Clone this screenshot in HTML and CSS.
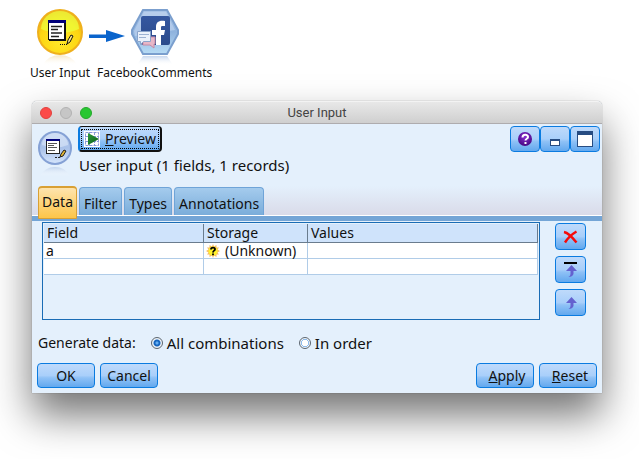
FILE: index.html
```html
<!DOCTYPE html>
<html lang="en">
<head>
<meta charset="utf-8">
<title>User Input</title>
<link rel="stylesheet" href="styles.css">
</head>
<body>
<svg class="defs" width="0" height="0" aria-hidden="true">
  <defs>
    <radialGradient id="yellow" cx="50%" cy="70%" r="65%"><stop offset="0" stop-color="#ffe92a"/><stop offset=".7" stop-color="#fdd512"/><stop offset="1" stop-color="#eda716"/></radialGradient>
    <linearGradient id="blueball" x1="0" y1="0" x2="0" y2="1"><stop offset="0" stop-color="#bccfef"/><stop offset=".5" stop-color="#a9c1e9"/><stop offset="1" stop-color="#d6e6fc"/></linearGradient>
    <linearGradient id="hex" x1="0" y1="0" x2="0" y2="1"><stop offset="0" stop-color="#a9c4e8"/><stop offset=".5" stop-color="#8fb3de"/><stop offset="1" stop-color="#b7dcf5"/></linearGradient>
    <linearGradient id="fb" x1="0" y1="0" x2="0" y2="1"><stop offset="0" stop-color="#3558a0"/><stop offset="1" stop-color="#2b4a8b"/></linearGradient>
    <linearGradient id="fadeYellow" x1="0" y1="0" x2="0" y2="1"><stop offset="0" stop-color="#f3dfb0" stop-opacity=".8"/><stop offset="1" stop-color="#fff" stop-opacity="0"/></linearGradient>
    <linearGradient id="fadeBlue" x1="0" y1="0" x2="0" y2="1"><stop offset="0" stop-color="#b9cdea" stop-opacity=".8"/><stop offset="1" stop-color="#fff" stop-opacity="0"/></linearGradient>
    <radialGradient id="purple" cx="50%" cy="35%" r="60%"><stop offset="0" stop-color="#8a2fd0"/><stop offset="1" stop-color="#4b0a87"/></radialGradient>
    <linearGradient id="play" x1="0" y1="0" x2="1" y2="1"><stop offset="0" stop-color="#2f9a3c"/><stop offset="1" stop-color="#075c14"/></linearGradient>
  </defs>
</svg>

<main class="canvas">
  <div class="node">
    <svg width="48" height="56" viewBox="0 0 48 56" aria-hidden="true">
      <path d="M7 56Q12 46 24 46T41 56Z" fill="url(#fadeYellow)"/>
      <circle cx="24" cy="23" r="22" fill="url(#yellow)" stroke="#efb01d" stroke-width="2"/>
      <path d="M5 20a19 18 0 0 1 38 0q-19 8-38 0z" fill="#ecff3c" opacity=".75"/>
      <rect x="12.500" y="12.500" width="16" height="18" fill="#fff" stroke="#111"/>
      <path d="M13 31.500h17M29.500 14v17" stroke="#111" fill="none"/>
      <rect x="12" y="11" width="18" height="3" fill="#00007a"/>
      <path d="M15 17.500h11M15 20.500h7M15 24h11M15 27.500h8" stroke="#222" stroke-width="1.500"/>
      <path d="M24 35.500h7" stroke="#111" stroke-dasharray="1 1"/>
      <path d="M31 35l1-4 3-5 2 1-3 6z" fill="#ffe98a" stroke="#111"/>
    </svg>
    <span>User Input</span>
    <svg class="link" width="36" height="12" viewBox="0 0 36 12" aria-hidden="true"><path d="M0 4.500h17V0L36 6 17 12V8H0z" fill="#0a64cc"/></svg>
  </div>
  <div class="node">
    <svg width="48" height="56" viewBox="0 0 48 56" aria-hidden="true">
      <path d="M6 56l6-9h24l6 9z" fill="url(#fadeBlue)"/>
      <path d="M12 1h24l11 20v4L36 45H12L1 25v-4z" fill="url(#hex)" stroke="#7b9fce" stroke-width="2"/>
      <path d="M13 3h22l9 18-40 6-1-5z" fill="#c0d4f0" opacity=".65"/>
      <rect x="10" y="7" width="29" height="29" rx="2" fill="url(#fb)"/>
      <path d="M25 36V26h-4v-5h4v-3c0-5 3-7 9-6v5c-4 0-4 0-4 2v2h4l-1 5h-3v10z" fill="#fff"/>
      <path d="M12 28h12v7h-1v4l-4-3h-7z" fill="#e8b7c7" stroke="#c58ba6"/>
      <path d="M6.500 22.500h13v10h-7l-3 3v-3h-3z" fill="#eaf1fb" stroke="#8aa4cb"/>
      <path d="M8 25.500h10M8 28.500h7" stroke="#9cb2d3"/>
    </svg>
    <span>FacebookComments</span>
  </div>
</main>

<section class="window" aria-label="User Input">
  <header class="titlebar">
    <div class="lights"><i class="red"></i><i class="grey"></i><i class="green"></i></div>
    <h1>User Input</h1>
  </header>
  <form class="dialog">
    <div class="head">
      <svg class="badge" width="36" height="46" viewBox="0 0 36 46" aria-hidden="true">
        <path d="M3 46Q8 37 18 37T33 46Z" fill="url(#fadeBlue)"/>
        <circle cx="18" cy="18" r="16" fill="url(#blueball)" stroke="#85a1d5" stroke-width="2"/>
        <path d="M5 15a13 12 0 0 1 26 0q-13 5-26 0z" fill="#dce7f9" opacity=".6"/>
        <rect x="9.500" y="9.500" width="13" height="14" fill="#fff" stroke="#222"/>
        <rect x="9" y="9" width="14" height="2" fill="#00007a"/>
        <path d="M11 13.500h9M11 15.500h6M11 17.500h9M11 20.500h7" stroke="#555"/>
        <path d="M18 27.500h6" stroke="#222" stroke-dasharray="2 1"/>
        <path d="M23 27l1-3 3-4 2 1-3 5z" fill="#e4b630" stroke="#222"/>
      </svg>
      <div class="intro">
        <button type="button" class="btn preview">
          <svg width="16" height="16" viewBox="0 0 16 16" aria-hidden="true"><path d="M0 0h16v16H0z" fill="#fff"/><path d="M1.500 1.500h13v13h-13zM5.500 1v14M10.500 1v14M1 5.500h14M1 10.500h14" fill="none" stroke="#8a9bd8" stroke-dasharray="3 1"/><path d="M4 2l11 6-11 6z" fill="url(#play)"/></svg>
          <span><u>P</u>review</span>
        </button>
        <p>User input (1 fields, 1 records)</p>
      </div>
      <div class="tools">
        <button type="button" class="btn" aria-label="Help"><svg width="16" height="16" viewBox="0 0 16 16"><circle cx="8" cy="8" r="7" fill="url(#purple)"/><path d="M5.500 6.500c0-3.500 5.500-3.500 5.500-.5 0 2-2.500 1.500-2.500 3.500M8.500 11v2" fill="none" stroke="#fff" stroke-width="2"/></svg></button>
        <button type="button" class="btn" aria-label="Minimize"><svg width="16" height="16" viewBox="0 0 16 16"><path d="M3 8h10v7H3z" fill="#274c82"/><path d="M4 10h8v4H4z" fill="#fff"/></svg></button>
        <button type="button" class="btn" aria-label="Maximize"><svg width="16" height="16" viewBox="0 0 16 16"><path d="M0 0h16v16H0z" fill="#274c82"/><path d="M1 4h14v11H1z" fill="#fff"/></svg></button>
      </div>
    </div>
    <nav class="tabs">
      <button type="button" class="tab active">Data</button>
      <button type="button" class="tab">Filter</button>
      <button type="button" class="tab">Types</button>
      <button type="button" class="tab">Annotations</button>
    </nav>
    <div class="panel">
      <div class="frame">
        <table>
          <colgroup><col class="c1"><col class="c2"><col></colgroup>
          <thead><tr><th>Field</th><th>Storage</th><th>Values</th></tr></thead>
          <tbody>
            <tr><td>a</td><td><div class="kind"><svg width="14" height="14" viewBox="0 0 14 14" aria-hidden="true"><path d="M7 0l1 2.500L10.500 1l0 2.500 2.500 0-1.500 2L14 7l-2.500 1.500 1.500 2-2.500 0 0 2.500L8 11.500 7 14 6 11.500 3.500 13l0-2.500-2.500 0 1.500-2L0 7l2.500-1.500L1 3.500l2.500 0L3.500 1 6 2.500z" fill="#f9bd62"/><circle cx="7" cy="7" r="4.500" fill="#fff32b"/><path d="M5 5.500c0-2.500 4-2.500 4-.3C9 6.800 7 6.500 7 8.500M7 9.500v1.800" fill="none" stroke="#000" stroke-width="1.800"/></svg>(Unknown)</div></td><td></td></tr>
            <tr><td></td><td></td><td></td></tr>
          </tbody>
        </table>
      </div>
      <div class="side">
        <button type="button" class="btn" aria-label="Delete"><svg width="16" height="14" viewBox="0 0 16 14"><path d="M1 2Q6 3 13.500 12.500M13.500 1.500Q6 6 2 12.500" fill="none" stroke="#f50a0a" stroke-width="2.400"/></svg></button>
        <button type="button" class="btn" aria-label="Move to top"><svg width="14" height="16" viewBox="0 0 14 16"><path d="M0 0h13v2H0z"/><path d="M7.500 3L13 9H9.500v3q-1 3-5 3 2-1 2-3V9H2z" fill="#6461cf"/></svg></button>
        <button type="button" class="btn" aria-label="Move up"><svg width="14" height="16" viewBox="0 0 14 16"><path d="M7.500 2L13 8H9.500v3q-1 3-5 3 2-1 2-3V8H2z" fill="#6461cf"/></svg></button>
      </div>
    </div>
    <div class="options" role="radiogroup" aria-labelledby="gen">
      <span id="gen">Generate data:</span>
      <label><input type="radio" name="mode" checked>All combinations</label>
      <label><input type="radio" name="mode">In order</label>
    </div>
    <footer class="actions">
      <button type="button" class="btn">OK</button>
      <button type="button" class="btn">Cancel</button>
      <button type="button" class="btn key push"><span><u>A</u>pply</span></button>
      <button type="button" class="btn key"><span><u>R</u>eset</span></button>
    </footer>
  </form>
</section>
</body>
</html>
```
FILE: styles.css
```css
* { box-sizing: border-box; }
body {
  margin: 0;
  min-height: 100vh;
  background: #fff;
  color: #111;
  font: 14px/18px "Noto Sans", "Open Sans", sans-serif;
}
button, input { font: inherit; color: inherit; margin: 0; }
svg { display: block; flex: none; }
.defs { position: absolute; }

.canvas {
  display: flex;
  gap: 7px;
  padding: 9px 0 0 30px;
  height: 101px;
}
.node {
  position: relative;
  display: flex;
  flex-direction: column;
  align-items: center;
  font-size: 12px;
  line-height: 16px;
}
.link { position: absolute; left: 59px; top: 21px; }

.window {
  margin: 0 37px 0 32px;
  border-radius: 5px 5px 0 0;
  background: #e4f0fc;
  box-shadow: 0 0 1px rgba(0, 0, 0, .6), 0 22px 40px rgba(0, 0, 0, .55);
}
.titlebar {
  display: grid;
  grid-template-columns: 1fr auto 1fr;
  align-items: center;
  height: 23px;
  padding: 0 8px;
  border-radius: 5px 5px 0 0;
  border-bottom: 1px solid #aeacae;
  border-top: 1px solid #f3f3f3;
  background: linear-gradient(#e8e8e8, #cfcfcf);
}
.titlebar h1 { margin: 0; font: 400 13px/18px Roboto, "Noto Sans", sans-serif; color: #444; }
.lights { display: flex; gap: 8px; }
.lights i { width: 12px; height: 12px; border-radius: 50%; border: 1px solid; }
.lights .red { background: #fc4a48; border-color: #e2403d; }
.lights .grey { background: #c6c6c6; border-color: #b2b2b2; }
.lights .green { background: #28c732; border-color: #24a82b; }

.btn {
  display: flex;
  align-items: center;
  justify-content: center;
  padding: 0;
  border: 1px solid #0a7be0;
  border-radius: 4px;
  background: linear-gradient(#bfdafb, #a9cffa 50%, #8fc1f6 60%, #62a8ee);
}
.head {
  display: flex;
  padding: 2px 2px 0 5px;
  height: 62px;
  background: #e4f0fc;
}
.badge { margin-top: 4px; }
.intro { flex: 1; margin-left: 5px; }
.intro p { margin: 4px 0 0 1px; font-size: 15px; }
.preview {
  height: 26px;
  width: 84px;
  gap: 5px;
  border: 2px solid #111;
  border-top-width: 1px;
  border-left-color: #0a7be0;
  outline: 1px dotted #000;
  outline-offset: -4px;
}
.tools { display: flex; }
.tools .btn { width: 30px; height: 26px; }

.tabs {
  display: flex;
  align-items: flex-end;
  gap: 2px;
  height: 35px;
  padding: 0 6px 1px;
  border-bottom: 5px solid #74a5d6;
  background: linear-gradient(#fff, #fff) bottom / 100% 1px no-repeat, linear-gradient(#e4f0fc, #d9dae8);
}
.tab {
  height: 28px;
  padding: 4px 4px 0;
  border: 1px solid #6fa4d8;
  border-bottom: 0;
  border-radius: 4px 4px 0 0;
  background: linear-gradient(#a4cbed, #7badda);
}
.tab.active {
  height: 33px;
  margin-bottom: -4px;
  padding: 0 3px 2px;
  border: 1px solid #d9a034;
  border-top: 2px solid #d9a034;
  border-radius: 4px 4px 1px 1px;
  background: linear-gradient(#fee4ae, #fdc549);
}

.panel { display: flex; gap: 15px; padding: 1px 16px 0 10px; }
.frame { flex: 1; height: 98px; padding: 1px; border: 1px solid #1a6cb5; }
table { width: 100%; border-collapse: separate; border-spacing: 0; table-layout: fixed; }
.c1 { width: 160px; }
.c2 { width: 104px; }
th, td { padding: 0 2px; text-align: left; font-weight: 400; line-height: 15px; height: 16px; }
th {
  height: 19px;
  line-height: 18px;
  background: #cfe3fb;
  border-right: 1px solid #6a7c8e;
  border-bottom: 1px solid #6a7c8e;
  padding: 0 3px;
}
td { background: #fff; border-right: 1px solid #b0cce8; border-bottom: 1px solid #b0cce8; }
.kind { display: flex; align-items: center; gap: 5px; height: 15px; }
.side { display: flex; flex-direction: column; gap: 6px; padding-top: 1px; }
.side .btn { width: 31px; height: 27px; }

.options { display: flex; align-items: center; padding: 14px 6px 0; font-size: 15px; }
.options label { display: flex; align-items: center; gap: 4px; margin-left: 15px; }
.options span { font-size: 14px; }
.options input {
  appearance: none;
  width: 12px;
  height: 12px;
  border: 1px solid #5c6670;
  border-radius: 50%;
  background: radial-gradient(circle, #fff 0 3px, #8fbcec 3px 4px, #eef3f8 4px);
}
.options input:checked { background: radial-gradient(circle, #62aef5 0 1px, #1767c0 2px 3px, #eef3f8 4px); }

.actions { display: flex; gap: 5px; padding: 11px 5px 5px; }
.actions .btn { width: 58px; height: 25px; }
.actions .key { padding-left: 4px; }
.actions .push { margin-left: auto; }
```
